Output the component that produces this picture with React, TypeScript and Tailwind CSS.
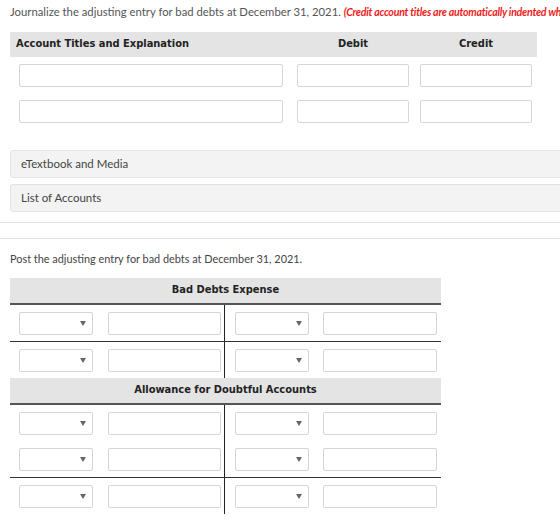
import React from "react";

const lato = { fontFamily: "Lato, 'Open Sans', sans-serif" };
const headFont = { fontFamily: "'DejaVu Sans Condensed', 'DejaVu Sans', Verdana, sans-serif" };

const TextBox = ({ className = "" }: { className?: string }) => (
  <div className={`h-[23px] rounded-[2px] border border-[#d6d6d6] bg-white ${className}`} />
);

const SelectBox = () => (
  <div className="relative h-[23px] w-[74px] rounded-[2px] border border-[#d6d6d6] bg-white">
    <span className="absolute right-[6px] top-[8px] h-0 w-0 border-x-[3px] border-t-[5px] border-x-transparent border-t-[#666]" />
  </div>
);

const TRow = ({ total = false }: { total?: boolean }) => (
  <div className={`grid grid-cols-[215px_216px] ${total ? "border-t border-[#333]" : ""}`}>
    <div className="flex h-[36px] items-center border-r border-[#222] pl-[9px]">
      <SelectBox />
      <TextBox className="ml-[15px] w-[113px]" />
    </div>
    <div className="flex h-[36px] items-center pl-[10px]">
      <SelectBox />
      <TextBox className="ml-[14px] w-[114px]" />
    </div>
  </div>
);

const TAccount = ({ title, rows }: { title: string; rows: number }) => (
  <div className="ml-[10px] w-[431px]">
    <div
      className="flex h-[27px] items-center justify-center border-b-2 border-[#555] bg-[#e4e4e4] text-[11px] font-bold text-[#222]"
      style={headFont}>
      {title}
    </div>
    {Array.from({ length: rows }).map((_, i) => (
      <TRow key={i} />
    ))}
    <TRow total />
  </div>
);

export default function App() {
  return (
    <div className="h-[525px] w-[560px] overflow-hidden bg-white" style={lato}>
      <div className="whitespace-nowrap pl-[10px] pt-[4px] text-[11.3px] leading-[16px] text-[#555]">
        Journalize the adjusting entry for bad debts at December 31, 2021.{" "}
        <span className="text-[10.6px] font-bold italic tracking-[-0.25px] text-[#ee1c1c]">
          (Credit account titles are automatically indented when amount is entered. Do not indent manually.)
        </span>
      </div>

      {/* journal entry table */}
      <div className="ml-[10px] mt-[12px] w-[527px]">
        <div
          className="flex h-[25px] items-center bg-[#e4e4e4] text-[11px] font-bold text-[#222]"
          style={headFont}>
          <div className="w-[280px] pl-[6px]">Account Titles and Explanation</div>
          <div className="w-[125px] pl-[7px]">
            <div className="w-[112px] text-center">Debit</div>
          </div>
          <div className="w-[122px] pl-[5px]">
            <div className="w-[112px] text-center">Credit</div>
          </div>
        </div>
        {[0, 1].map((i) => (
          <div key={i} className={`flex ${i === 0 ? "mt-[7px]" : "mt-[13px]"}`}>
            <TextBox className="ml-[9px] w-[264px]" />
            <TextBox className="ml-[14px] w-[112px]" />
            <TextBox className="ml-[11px] w-[112px]" />
          </div>
        ))}
      </div>

      <div className="mt-[27px] flex flex-col gap-[6px] pl-[10px]">
        <div className="flex h-[28px] w-[600px] items-center rounded-[3px] border border-[#e3e3e3] bg-[#f3f3f3] pl-[10px] text-[11.5px] text-[#444]">
          eTextbook and Media
        </div>
        <div className="flex h-[28px] w-[600px] items-center rounded-[3px] border border-[#e3e3e3] bg-[#f3f3f3] pl-[10px] text-[11.5px] text-[#444]">
          List of Accounts
        </div>
      </div>

      <div className="mt-[10px] h-[17px] border-y border-[#e2e2e2]" />

      <div className="pl-[10px] pt-[13px] text-[10.9px] leading-[14px] text-[#444]">
        Post the adjusting entry for bad debts at December 31, 2021.
      </div>

      <div className="mt-[12px]">
        <TAccount title="Bad Debts Expense" rows={1} />
        <TAccount title="Allowance for Doubtful Accounts" rows={2} />
      </div>
    </div>
  );
}
